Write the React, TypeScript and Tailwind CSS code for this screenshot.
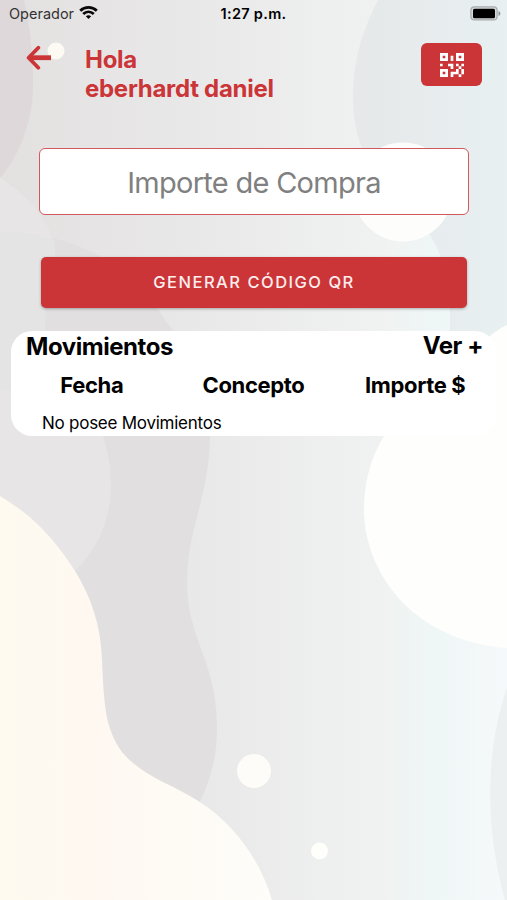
const columns = ['Fecha', 'Concepto', 'Importe $'];

function Background() {
  return (
    <svg className="absolute inset-0 h-full w-full" viewBox="0 0 507 900" preserveAspectRatio="none" aria-hidden="true">
      <defs>
        <linearGradient id="base" x1="0" x2="1" y1="0" y2="0">
          <stop offset="0" stopColor="#e3e0e0" />
          <stop offset="0.5" stopColor="#ebebeb" />
          <stop offset="0.75" stopColor="#f0f2f1" />
          <stop offset="0.85" stopColor="#eff6f6" />
          <stop offset="1" stopColor="#f5f9fb" />
        </linearGradient>
        <linearGradient id="sky" x1="0" x2="1" y1="0" y2="0">
          <stop offset="0" stopColor="#e6e8e9" />
          <stop offset="1" stopColor="#e8f0f2" />
        </linearGradient>
        <linearGradient id="cream" x1="0" x2="1" y1="0" y2="0">
          <stop offset="0" stopColor="#fefaf0" />
          <stop offset="0.35" stopColor="#fef8f1" />
          <stop offset="1" stopColor="#fefdf9" />
        </linearGradient>
      </defs>
      <rect width="507" height="900" fill="url(#base)" />
      <path d="M378 0C360 35 353 65 353 98C353 150 378 185 405 207C440 235 451 275 450 325V460H507V0Z" fill="url(#sky)" />
      <path d="M0 0H24C30 25 33 55 33 85C33 120 20 155 0 178Z" fill="#dfd8da" />
      <path d="M0 232C60 230 130 258 165 320C195 360 211 400 210 440C208 500 187 530 187 582C187 640 217 660 217 728C217 755 212 775 200 802L100 800L0 600Z" fill="#e1dfe0" />
      <path d="M0 178C28 195 55 225 55 255C55 285 45 290 45 325C45 365 111 400 111 485C111 520 97 550 75 571L0 560Z" fill="#e7e5e6" />
      <path d="M0 232C20 231 37 234 54 240C57 275 45 290 45 325C45 350 60 370 75 390H0Z" fill="#e5e4e5" />
      <path d="M507 688C485 750 485 830 505 900H507Z" fill="#ecf0f1" />
      <path d="M507 325C485 335 460 365 428 395C385 420 364 460 364 512C366 580 420 642 507 648Z" fill="#fefefc" />
      <path d="M0 496C35 517 55 540 75 571C94 602 101 630 102 660C104 705 105 728 122 752C142 776 170 783 200 802C235 825 260 860 272 900H0Z" fill="url(#cream)" />
      <circle cx="403" cy="192" r="49.5" fill="#fdfefb" />
      <circle cx="56" cy="51" r="8.5" fill="#fcfaf3" />
      <circle cx="254" cy="771" r="17" fill="#fefcf8" />
      <circle cx="319.5" cy="851" r="8.5" fill="#fefefb" />
    </svg>
  );
}

function QrIcon() {
  return (
    <svg width="32" height="32" viewBox="0 0 24 24" fill="currentColor">
      <path d="M3 11h2v2H3v-2m8-6h2v4h-2V5m-2 6h4v4h-2v-2H9v-2m6 0h2v2h2v-2h2v2h-2v2h2v4h-2v2h-2v-2h-4v2h-2v-4h4v-2h2v-2h-2v-2m4 8v-4h-2v4h2M15 3h6v6h-6V3m2 2v2h2V5h-2M3 3h6v6H3V3m2 2v2h2V5H5M3 15h6v6H3v-6m2 2v2h2v-2H5Z" />
    </svg>
  );
}

function StatusBar() {
  return (
    <div className="grid h-7 grid-cols-3 items-center pl-[9px] pr-[6px] text-sm text-black">
      <div className="flex items-center gap-[5px] text-[#333]">
        <span className="text-[14.5px]">Operador</span>
        <svg className="-mt-0.5" width="19" height="15" viewBox="0 0 19 15" fill="none" stroke="#0a0a0a" strokeWidth="2.8">
          <path d="M1.2 5.7C6 1.2 13 1.2 17.8 5.7" />
          <path d="M4.2 9C7.3 6.1 11.7 6.1 14.8 9" />
          <path d="M6.8 11.2C8.4 9.8 10.6 9.8 12.2 11.2L9.5 14Z" fill="#0a0a0a" stroke="none" />
        </svg>
      </div>
      <span className="-ml-[3px] text-center text-[14.5px] font-semibold tracking-[0.3px]">1:27 p.m.</span>
      <svg className="-mt-px justify-self-end" width="31" height="15" viewBox="0 0 31 15">
        <rect x="0.9" y="0.9" width="26.2" height="13" rx="3.5" fill="#d5dada" stroke="#a6abab" strokeWidth="1.2" />
        <rect x="3" y="2.8" width="22" height="9.4" rx="1.5" fill="#000" />
        <path d="M28.5 5v5c2.5-1 2.5-4 0-5Z" fill="#8f9494" />
      </svg>
    </div>
  );
}

export default function App() {
  return (
    <div className="relative h-[900px] w-full overflow-hidden font-['Inter',sans-serif]">
      <Background />
      <div className="relative flex flex-col">
        <StatusBar />

        <header className="flex items-start pl-[26px] pr-[25px] pt-[15px] text-[#cb3538]">
          <button className="mt-[2px]" aria-label="Volver">
            <svg width="26" height="26" viewBox="0 0 26 26" fill="none" stroke="currentColor">
              <path d="M12.3 2.7L2.6 12.7L12.3 22.7" strokeWidth="3.8" strokeLinecap="round" strokeLinejoin="round" />
              <path d="M3 12.7H25" strokeWidth="4.8" />
            </svg>
          </button>
          <h1 className="ml-[33px] mt-[2px] whitespace-nowrap text-[24px] font-bold leading-[29px] tracking-[-0.28px]">
            Hola
            <br />
            eberhardt daniel
          </h1>
          <button className="ml-auto flex h-[43px] w-[61px] items-center justify-center rounded-md bg-[#cb3538] text-white" aria-label="Código QR">
            <QrIcon />
          </button>
        </header>

        <input
          className="ml-[39px] mr-[38px] mt-[45px] h-[67px] rounded-md border border-[#d0595e] bg-white pt-0.5 text-center text-[29px] tracking-[-0.72px] outline-none placeholder:text-[#808080]"
          placeholder="Importe de Compra"
        />

        <button className="ml-[41px] mr-10 mt-[42px] h-[51px] rounded-[5px] bg-[#cb3538] text-[16.5px] font-medium tracking-[1.5px] text-[#fdeeee] shadow-[0_1px_3px_rgba(0,0,0,0.3)]">
          GENERAR CÓDIGO QR
        </button>

        <section className="ml-[11px] mr-[11px] mt-[23px] h-[105px] rounded-[21px] bg-white text-black">
          <div className="flex justify-between pl-[15px] pr-[13px] pt-px text-[24px] font-bold leading-[30px] tracking-[-0.45px]">
            <h2>Movimientos</h2>
            <button className="-mt-0.5">Ver +</button>
          </div>
          <div className="mt-[9px] grid grid-cols-3 text-center text-[22px] font-bold leading-7 tracking-[-0.35px]">
            {columns.map((column) => (
              <span key={column}>{column}</span>
            ))}
          </div>
          <p className="mt-3 pl-[31px] text-[17px] leading-6 tracking-[-0.25px]">No posee Movimientos</p>
        </section>
      </div>
    </div>
  );
}
